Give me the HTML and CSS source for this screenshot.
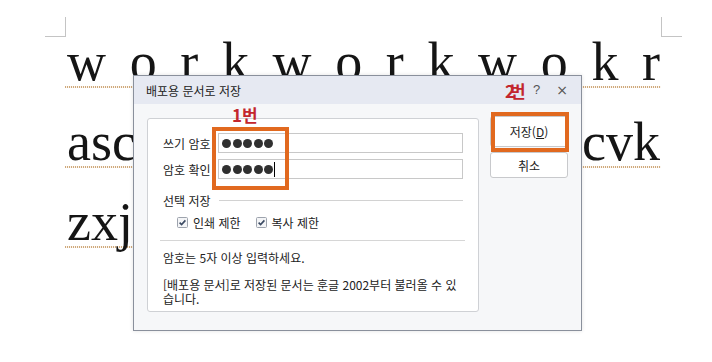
FILE: index.html
```html
<!DOCTYPE html>
<html lang="ko">
<head>
<meta charset="utf-8">
<title>배포용 문서로 저장</title>
<link rel="stylesheet" href="styles.css">
</head>
<body>
<div class="page">
  <div class="content">
    <div class="line l1"><span>w</span><span>o</span><span>r</span><span>k</span><span>w</span><span>o</span><span>r</span><span>k</span><span>w</span><span>o</span><span>k</span><span>r</span></div>
    <div class="line l2"><span>asc</span><span>cvk</span></div>
    <div class="line l3"><span>zxj</span></div>
  </div>
</div>

<div class="dialog">
  <div class="titlebar">
    <span class="title">배포용 문서로 저장</span>
    <div class="tb-icons">
      <span class="help">?</span>
      <span class="close">×</span>
    </div>
  </div>
  <div class="dlg-body">
    <div class="panel">
      <div class="fields">
        <div class="field">
          <span class="label">쓰기 암호</span>
          <div class="input"><span class="dots"><i></i><i></i><i></i><i></i><i></i></span></div>
        </div>
        <div class="field">
          <span class="label">암호 확인</span>
          <div class="input"><span class="dots"><i></i><i></i><i></i><i></i><i></i></span><span class="caret"></span></div>
        </div>
      </div>
      <div class="group-head"><span>선택 저장</span><span class="hr"></span></div>
      <div class="checks">
        <label class="check"><svg class="cb" width="11" height="11" viewBox="0 0 11 11"><rect x="0.5" y="0.5" width="10" height="10" rx="1" fill="#f4f5f7" stroke="#9da3ad"/><path d="M2.6 5.6 L4.6 7.6 L8.4 3.4" fill="none" stroke="#3b4a63" stroke-width="1.6"/></svg>인쇄 제한</label>
        <label class="check"><svg class="cb" width="11" height="11" viewBox="0 0 11 11"><rect x="0.5" y="0.5" width="10" height="10" rx="1" fill="#f4f5f7" stroke="#9da3ad"/><path d="M2.6 5.6 L4.6 7.6 L8.4 3.4" fill="none" stroke="#3b4a63" stroke-width="1.6"/></svg>복사 제한</label>
      </div>
      <div class="sep"></div>
      <p class="note">암호는 5자 이상 입력하세요.</p>
      <p class="note two">[배포용 문서]로 저장된 문서는 훈글 2002부터 불러올 수 있<br>습니다.</p>
    </div>
    <div class="buttons">
      <button class="btn save">저장(<u>D</u>)</button>
      <button class="btn cancel">취소</button>
    </div>
  </div>
  <span class="anno anno1">1번</span>
  <span class="anno anno2"><span class="two-digit">2</span>번</span>
  <div class="mark mark1"></div>
  <div class="mark mark2"></div>
</div>
</body>
</html>
```

FILE: styles.css
```css
html, body {
  margin: 0;
  padding: 0;
  background: #ffffff;
}

body {
  width: 712px;
  height: 362px;
  overflow: hidden;
  position: relative;
  font-family: "Noto Sans CJK KR", "Noto Sans", sans-serif;
}

.page {
  padding: 35px 51px 0 65px;
}

.content {
  position: relative;
  width: 596px;
}

.content::before,
.content::after {
  content: "";
  position: absolute;
  top: -18px;
  width: 20px;
  height: 19px;
  border-bottom: 1px solid #c4c4c4;
}

.content::before {
  left: -20px;
  border-right: 1px solid #c4c4c4;
}

.content::after {
  right: -21px;
  border-left: 1px solid #c4c4c4;
}

.line {
  display: flex;
  justify-content: space-between;
  height: 53px;
  margin-bottom: 27px;
  font-family: "Liberation Serif", "Times New Roman", serif;
  font-size: 54px;
  line-height: 54px;
  color: #151515;
  background-image: repeating-linear-gradient(90deg, #cfa97c 0 1px, #fbf6ef 1px 2px);
  background-repeat: no-repeat;
  background-position: left bottom;
  background-size: 100% 2px;
}

.l1 {
  padding: 0 1px 0 2px;
}

.l2 {
  padding: 0 1px 0 2px;
}

.l3 {
  width: 420px;
  padding-left: 2px;
}

/* dialog */
.dialog {
  position: absolute;
  left: 133px;
  top: 75px;
  width: 447px;
  height: 254px;
  border: 1px solid #8a909c;
  background: #f6f7f9;
  box-shadow: 0 0 4px rgba(0, 0, 0, 0.12);
  font-size: 12px;
  color: #222;
}

.titlebar {
  height: 28px;
  display: flex;
  align-items: center;
  justify-content: space-between;
  padding: 0 12px 0 12px;
  background: #e6e9f2;
}

.title {
  font-size: 12px;
  color: #222;
}

.tb-icons {
  display: flex;
  align-items: center;
  gap: 16px;
  color: #555;
  line-height: 14px;
}

.help {
  font-family: "Liberation Sans", sans-serif;
  font-size: 13px;
}

.close {
  font-family: "DejaVu Sans", sans-serif;
  font-size: 14px;
  margin-right: 1px;
}

.dlg-body {
  display: flex;
  align-items: flex-start;
  gap: 11px;
  padding: 14px 13px 0 13px;
}

.panel {
  width: 300px;
  height: 178px;
  padding: 14px 15px 0 15px;
  background: #fff;
  border: 1px solid #cfd1d5;
  border-radius: 3px;
}

.fields {
  display: flex;
  flex-direction: column;
  gap: 6px;
}

.field {
  display: flex;
  align-items: center;
}

.label {
  width: 55px;
  flex: none;
}

.input {
  flex: 1;
  height: 18px;
  border: 1px solid #c8c8c8;
  background: #fff;
  display: flex;
  align-items: center;
  padding-left: 3px;
}

.dots {
  display: flex;
  gap: 1.5px;
}

.dots i {
  width: 9px;
  height: 9px;
  border-radius: 50%;
  background: #303030;
}

.caret {
  width: 1px;
  height: 15px;
  background: #000;
  margin-left: 1px;
}

.group-head {
  display: flex;
  align-items: center;
  gap: 8px;
  margin-top: 14px;
  height: 14px;
}

.hr {
  flex: 1;
  height: 1px;
  background: #d2d2d2;
}

.checks {
  display: flex;
  gap: 15px;
  margin-top: 8px;
  padding-left: 14px;
  height: 14px;
  align-items: center;
}

.check {
  display: flex;
  align-items: center;
  gap: 5px;
}

.sep {
  height: 1px;
  background: #d6d6d6;
  margin: 11px -2px 0 -3px;
}

.note {
  margin: 10px 0 0 0;
  line-height: 14px;
}

.note.two {
  margin-top: 13px;
  line-height: 13.5px;
}

.buttons {
  display: flex;
  flex-direction: column;
  gap: 5px;
  width: 78px;
  margin-top: -2px;
}

.btn {
  font-family: "Noto Sans CJK KR", "Noto Sans", sans-serif;
  font-size: 12px;
  color: #222;
  background: #fff;
  border: 1px solid #c8c9cc;
  border-radius: 3px;
  padding: 0;
}

.btn.save {
  height: 31px;
}

.btn.cancel {
  height: 26px;
}

.anno {
  position: absolute;
  font-weight: 700;
  font-size: 17px;
  line-height: 18px;
  color: #c3262d;
  font-family: "Noto Sans CJK KR", sans-serif;
}

.anno1 {
  left: 98px;
  top: 30px;
}

.anno2 {
  left: 371px;
  top: 6px;
}

.two-digit {
  margin-right: -5px;
}

.mark {
  position: absolute;
  border: 4px solid #e1691f;
  box-sizing: border-box;
}

.mark1 {
  left: 78px;
  top: 51px;
  width: 77px;
  height: 63px;
}

.mark2 {
  left: 357px;
  top: 36px;
  width: 78px;
  height: 40px;
}
```
